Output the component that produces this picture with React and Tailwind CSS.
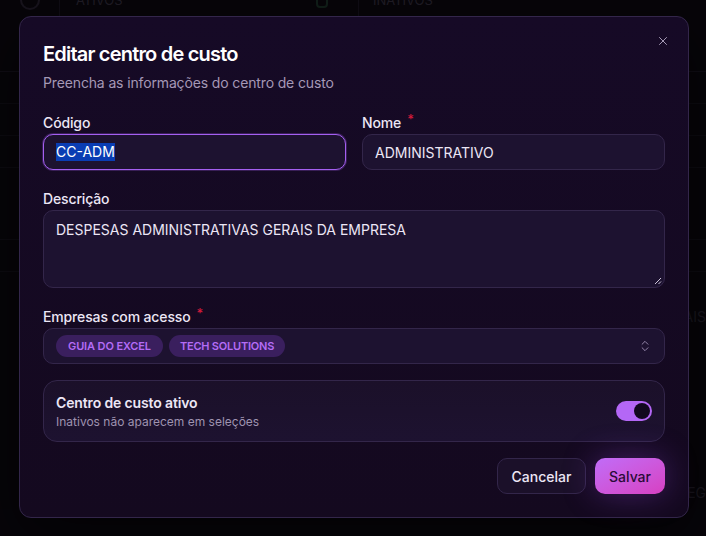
import React from 'react';
import { X, ChevronsUpDown } from 'lucide-react';

const font = { fontFamily: 'Inter, "Noto Sans", sans-serif' };

function Label({ children, required }) {
    return (
        <div className="h-5 mb-0.5 flex items-center gap-1.5 text-[14px] font-medium text-[#ece6f5] tracking-[-0.01em]">
            {children}
            {required && <span className="text-[#d11a3a] text-[13px] -mt-1">*</span>}
        </div>
    );
}

function BackgroundPage() {
    const rows = ['', '', '', '', ''];
    return (
        <div className="w-full h-full bg-[#08060b] opacity-50">
            <div className="h-[72px] flex border-b border-[#1a1622]">
                <div className="w-[60px] border-r border-[#1a1622] flex justify-center">
                    <div className="w-5 h-5 mt-[-10px] rounded-full border-2 border-[#2a2533]"></div>
                </div>
                <div className="flex-1 px-4 flex justify-between">
                    <span className="text-[13px] leading-4 text-[#3a3544] -mt-2">ATIVOS</span>
                    <span className="w-3 h-3 -mt-1 mr-[14px] rounded-sm border-2 border-[#1d3a2a]"></span>
                </div>
                <div className="w-[348px] border-l border-[#1a1622] px-[14px] text-[13px] leading-4 text-[#3a3544] -mt-2">INATIVOS</div>
            </div>
            {rows.map((r, i) => (
                <div key={i} className={`${i === 3 ? 'h-[72px]' : 'h-[32px]'} border-b border-[#15121b]`}></div>
            ))}
            <div className="flex justify-end mt-[35px] text-[14px] leading-5 text-[#2e2a36]">AIS</div>
            <div className="flex justify-end mt-[156px] text-[14px] leading-5 text-[#2e2a36]">EG</div>
        </div>
    );
}

export default function App() {
    return (
        <div style={font} className="relative w-[706px] h-[536px] overflow-hidden bg-[#060408]">
            <BackgroundPage />

            {/* Dialog */}
            <div className="absolute left-[19px] top-[16px] w-[670px] h-[502px] rounded-xl border border-[#33264a] bg-gradient-to-b from-[#160a26] to-[#14091f] shadow-[0_20px_60px_rgba(0,0,0,0.6)] px-[23px] pt-[23px]">
                <button className="absolute right-[18px] top-[17px] text-[#b2a6c2]">
                    <X className="w-[14px] h-[14px]" strokeWidth={1.6} />
                </button>

                <h2 className="h-7 leading-7 text-[20px] font-semibold text-white tracking-[-0.04em]">Editar centro de custo</h2>
                <p className="mt-[5px] h-5 leading-5 text-[14px] text-[#a598b6] tracking-[-0.01em]">Preencha as informações do centro de custo</p>

                <div className="mt-[19px] grid grid-cols-2 gap-4">
                    <div>
                        <Label>Código</Label>
                        <div className="h-9 rounded-[10px] border border-[#a45ff0] bg-[#1d1230] px-3 flex items-center text-[14px] shadow-[0_0_0_1px_rgba(164,95,240,0.25)]">
                            <span className="bg-[#0a3db3] text-white leading-[18px]">CC-ADM</span>
                        </div>
                    </div>
                    <div>
                        <Label required>Nome</Label>
                        <div className="h-9 rounded-[10px] border border-[#33264a] bg-[#1d1230] px-3 flex items-center text-[14px] text-[#ece6f5]">
                            ADMINISTRATIVO
                        </div>
                    </div>
                </div>

                <div className="mt-[18px]">
                    <Label>Descrição</Label>
                    <div className="relative h-[78px] rounded-[10px] border border-[#33264a] bg-[#1d1230] px-3 pt-[8px] text-[14px] text-[#ece6f5]">
                        DESPESAS ADMINISTRATIVAS GERAIS DA EMPRESA
                        <svg className="absolute right-[2px] bottom-[2px]" width="8" height="8" viewBox="0 0 8 8">
                            <path d="M7 1 L1 7 M7 4.5 L4.5 7" stroke="#cfc6db" strokeWidth="1" />
                        </svg>
                    </div>
                </div>

                <div className="mt-[18px]">
                    <Label required>Empresas com acesso</Label>
                    <div className="h-9 rounded-[10px] border border-[#33264a] bg-[#1d1230] pl-3 pr-3 flex items-center gap-1.5">
                        <span className="h-[22px] px-3 rounded-full bg-[#3a1f5e] text-[#b46cf6] text-[11px] font-semibold tracking-[-0.01em] flex items-center">GUIA DO EXCEL</span>
                        <span className="h-[22px] px-[11px] rounded-full bg-[#3a1f5e] text-[#b46cf6] text-[11px] font-semibold tracking-[-0.02em] flex items-center">TECH SOLUTIONS</span>
                        <ChevronsUpDown className="ml-auto w-[14px] h-[14px] text-[#9c8db2]" strokeWidth={1.6} />
                    </div>
                </div>

                <div className="mt-4 h-[62px] rounded-[14px] border border-[#33264a] bg-gradient-to-b from-[#1b1029] to-[#1d1230] px-3 flex items-center">
                    <div className="flex-1">
                        <div className="text-[14px] font-semibold text-[#ece6f5] leading-5 tracking-[-0.01em]">Centro de custo ativo</div>
                        <div className="text-[12px] text-[#9f93b0] leading-4 mt-[1px]">Inativos não aparecem em seleções</div>
                    </div>
                    <div className="w-9 h-5 rounded-full bg-[#b467f6] flex items-center justify-end px-[2px]">
                        <div className="w-4 h-4 rounded-full bg-[#12081f]"></div>
                    </div>
                </div>

                <div className="mt-4 flex justify-end gap-[9px]">
                    <button className="h-9 w-[89px] rounded-[10px] border border-[#33264a] bg-[#1b1029] text-[14px] font-medium text-[#ece6f5]">Cancelar</button>
                    <button className="h-9 w-[70px] rounded-[10px] bg-gradient-to-br from-[#c06cf8] to-[#d73fc2] text-[14px] font-medium text-[#2a0b38] shadow-[0_0_32px_rgba(150,70,230,0.35)]">Salvar</button>
                </div>
            </div>
        </div>
    );
}
